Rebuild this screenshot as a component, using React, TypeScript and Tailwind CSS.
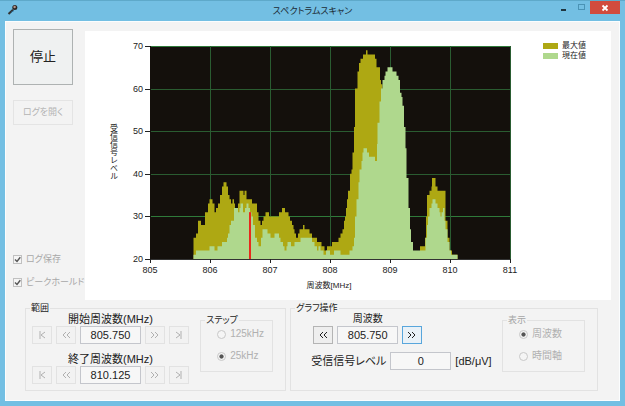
import type { ReactNode } from "react";

// [x offset inside the plot, level in dB], each level holds until the next entry
type Step = [number, number];

const PEAK: Step[] = [
  [43.5, 25], [46, 26], [48, 29], [51, 28], [55, 31], [58, 33], [59.5, 34], [62.5, 33], [64.5, 31], [66, 32],
  [68, 33], [70, 35], [72, 37], [73.5, 38], [76.5, 37], [78, 35], [79.5, 34], [81, 33], [82.5, 34], [84, 33],
  [85, 32], [88, 33], [89.5, 36], [93.5, 35], [94.5, 36], [96.5, 34], [102, 33], [107, 31], [108.5, 29],
  [110.5, 28], [112, 29], [113.5, 30], [115.5, 31], [119, 30], [129, 31], [132, 32], [135, 31], [138.5, 30],
  [140, 29], [142, 28], [143.5, 27], [144.5, 26], [146, 25], [148, 26], [149.5, 27], [153, 28], [154.5, 27],
  [159.5, 26], [162, 25], [167, 24], [171.5, 23], [174.5, 22], [177, 23], [182, 24], [188.5, 25], [190.5, 26],
  [192.5, 27], [194, 29], [195, 30], [196, 32], [197, 34], [198, 36], [200, 40], [201.5, 41], [202.5, 45],
  [204, 51], [205, 60], [207.5, 64], [209, 66], [210.5, 67], [213, 68], [216, 69], [217.5, 68], [225, 67],
  [226.5, 65], [230, 62], [231, 61], [232.5, 20], [270, 23], [275, 25], [276, 30], [277, 35], [279.5, 36],
  [281.5, 37], [282, 39], [285.5, 37], [287.5, 36], [295.5, 29], [297.5, 25], [299.5, 22], [302, 21], [307.5, 20],
];

const CURRENT: Step[] = [
  [43.5, 21], [46, 22], [59.5, 23], [64.5, 22], [67.5, 23], [72, 24], [77, 25], [78, 26], [79.5, 28], [81, 29],
  [84, 32], [88, 31], [89.5, 32], [90.5, 33], [93, 31], [95, 32], [96.5, 33], [98.5, 32], [100, 31], [101.5, 30],
  [103, 28], [105, 25], [107, 24], [108.5, 23], [111, 25], [112.5, 27], [117.5, 26], [120.5, 25], [124.5, 26],
  [129, 25], [130.5, 24], [133, 23], [134.5, 22], [136.5, 23], [137.5, 24], [141, 23], [144.5, 24], [150.5, 25],
  [162, 24], [164.5, 23], [167, 22], [168.5, 23], [170.5, 22], [173.5, 21], [176, 22], [180, 21], [184, 22],
  [190.5, 21], [199.5, 22], [202.5, 23], [204, 25], [205, 30], [206.5, 34], [208.5, 38], [209.5, 41], [211.5, 43],
  [212.5, 45], [213.5, 46], [217, 45], [219, 44], [225, 43], [227, 47], [227.5, 52], [229.5, 57], [231, 60],
  [232.5, 62], [234.5, 63], [235.5, 64], [237.5, 65], [242.5, 64], [246.5, 63], [248.5, 62], [250, 59], [251.5, 58],
  [252.5, 56], [254, 51], [255.5, 46], [256.5, 39], [258.5, 32], [260, 27], [261, 24], [263, 22], [275.5, 25],
  [277, 28], [278, 30], [279.5, 32], [281.5, 33], [282.5, 34], [285.5, 33], [287.5, 32], [289.5, 31], [290.5, 30],
  [291.5, 31], [293, 32], [294.5, 29], [295.5, 27], [297.5, 24], [299.5, 22], [301, 21], [307.5, 20],
];

const LEFT = 65;
const TOP = 15;
const WIDTH = 360;
const HEIGHT = 213;

const levelY = (db: number) => TOP + HEIGHT - ((db - 20) * HEIGHT) / 50;

const toPath = (steps: Step[]) => {
  const body = steps.map(([x, db]) => `H${LEFT + x}V${levelY(db)}`).join("");
  return `M${LEFT + steps[0][0]} ${levelY(20)}${body}Z`;
};

function SpectrumChart() {
  const levels = [70, 60, 50, 40, 30, 20];
  const freqs = [805, 806, 807, 808, 809, 810, 811];

  return (
    <svg viewBox="0 0 430 269" className="block min-w-0 flex-1 overflow-visible text-[9px]" role="img" aria-label="受信信号レベル">
      <rect x={LEFT} y={TOP} width={WIDTH} height={HEIGHT} fill="#14100c" />
      {levels.map(db => (
        <g key={db}>
          <path
            d={`M${LEFT} ${Math.round(levelY(db)) + 0.5}h${WIDTH}`}
            stroke={db === 20 ? "#333333" : db === 70 || db === 30 ? "#2f7a3a" : "#2a5c31"}
          />
          <path d={`M${LEFT - 5} ${Math.round(levelY(db)) + 0.5}h5`} stroke="#222222" />
          <text x={LEFT - 7} y={Math.round(levelY(db)) + 3} textAnchor="end" fill="#222222">{db}</text>
        </g>
      ))}
      {freqs.map((freq, i) => (
        <g key={freq}>
          <path d={`M${LEFT + i * 60 + 0.5} ${TOP}v${HEIGHT}`} stroke={i === 0 ? "#14100c" : "#2a5c31"} />
          <path d={`M${LEFT + i * 60 + 0.5} ${TOP + HEIGHT}v4`} stroke="#222222" />
          <text x={LEFT + i * 60} y={242} textAnchor="middle" fill="#222222">{freq}</text>
        </g>
      ))}
      <path d={toPath(PEAK)} fill="#aea813" />
      <path d={toPath(CURRENT)} fill="#afd88d" />
      <rect x={LEFT + 99} y={levelY(31)} width={2} height={TOP + HEIGHT - levelY(31)} fill="#e8291c" />
      <text x={244} y={257} textAnchor="middle" fill="#222222" className="text-[8px]">周波数[MHz]</text>
      <text x={28} y={121} textAnchor="middle" fill="#222222" className="text-[8px] [font-feature-settings:normal] [writing-mode:vertical-rl]">
        受信信号レベル
      </text>
    </svg>
  );
}

function Group({ title, muted, className = "", children }: {
  title: string;
  muted?: boolean;
  className?: string;
  children: ReactNode;
}) {
  return (
    <fieldset className={`min-w-0 border border-[#e2e2e2] ${className}`}>
      <legend className={`ml-1 px-px text-[9px] leading-2 ${muted ? "text-[#a5a5a5]" : "text-[#222222]"}`}>{title}</legend>
      {children}
    </fieldset>
  );
}

const ARROWS = {
  first: "M5 3V11M10 4L6 7L10 10",
  prev: "M7 4L4 7L7 10M11 4L8 7L11 10",
  next: "M3 4L6 7L3 10M7 4L10 7L7 10",
  last: "M4 4L8 7L4 10M9 3V11",
};

function StepButton({ icon, label, variant = "disabled" }: {
  icon: keyof typeof ARROWS;
  label: string;
  variant?: "disabled" | "normal" | "focused";
}) {
  const look = {
    disabled: "border-[#e2e2e2] bg-[#f2f2f2] text-[#b0b0b0]",
    normal: "border-[#b4b4b4] bg-[#eeeeee] text-[#222222]",
    focused: "border-[#58a6dc] bg-[#e9f1f7] text-[#222222]",
  }[variant];
  return (
    <button
      type="button"
      aria-label={label}
      disabled={variant === "disabled"}
      className={`flex h-[18px] w-5 shrink-0 items-center justify-center border ${look}`}
    >
      <svg viewBox="0 0 14 14" className="size-3.5 shrink-0" fill="none" stroke="currentColor">
        <path d={ARROWS[icon]} />
      </svg>
    </button>
  );
}

function ValueBox({ id, value }: { id: string; value: string }) {
  return (
    <input
      id={id}
      readOnly
      defaultValue={value}
      className="h-[18px] w-[61px] border border-[#c4c6cc] bg-[#f7f7f7] text-center text-[11px] text-[#222222] outline-none"
    />
  );
}

function RangeField({ id, label, value }: { id: string; label: string; value: string }) {
  return (
    <div className="flex flex-col items-center">
      <label htmlFor={id} className="text-[11px] leading-[14px]">{label}</label>
      <div className="flex items-center gap-1">
        <StepButton icon="first" label="最小" />
        <StepButton icon="prev" label="前へ" />
        <ValueBox id={id} value={value} />
        <StepButton icon="next" label="次へ" />
        <StepButton icon="last" label="最大" />
      </div>
    </div>
  );
}

function Radio({ name, label, checked }: { name: string; label: string; checked?: boolean }) {
  return (
    <label className="flex items-center gap-1 text-[10px] leading-4 text-[#b0b0b0]">
      <input
        type="radio"
        name={name}
        defaultChecked={checked}
        disabled
        className="size-[9px] appearance-none rounded-full border border-[#c8c8c8] bg-[#f5f5f5] checked:bg-[radial-gradient(#555555_35%,#f5f5f5_50%)]"
      />
      {label}
    </label>
  );
}

function Check({ label }: { label: string }) {
  return (
    <label className="flex items-center gap-1 text-[9px] leading-4 whitespace-nowrap text-[#a8a8a8]">
      <span className="relative flex size-[9px]">
        <input type="checkbox" defaultChecked disabled className="size-[9px] appearance-none border border-[#c0c0c0] bg-[#f5f5f5]" />
        <svg viewBox="0 0 9 9" className="pointer-events-none absolute inset-0 size-[9px]" fill="none" stroke="#555555" strokeWidth="1.4">
          <path d="M2 4.5L4 6.5L7.3 2.2" />
        </svg>
      </span>
      {label}
    </label>
  );
}

function TitleBar() {
  return (
    <header className="flex h-5 items-start">
      <div className="flex flex-1">
        <svg viewBox="0 0 12 12" className="mt-[3px] ml-0.5 size-3">
          <path d="M1.5 10L6 5.8" stroke="#333333" strokeWidth="2" />
          <path d="M4 8.5L7 6.5" stroke="#2f6d94" strokeWidth="1" />
          <circle cx="7.8" cy="3.6" r="2.5" fill="#2b2625" />
          <circle cx="7.6" cy="3" r="1.2" fill="#b5968c" />
        </svg>
      </div>
      <h1 className="pt-0.5 text-[9px] leading-4 text-[#1c2c36]">スペクトラムスキャン</h1>
      <div className="flex flex-1 justify-end">
        <button type="button" aria-label="最小化" className="flex h-3 w-[18px] items-end justify-center pb-0.5">
          <span className="h-0.5 w-[5px] bg-[#1f3540]" />
        </button>
        <button type="button" aria-label="最大化" className="flex h-3 w-[18px] items-center justify-center">
          <span className="h-[6px] w-[7px] border border-[#4a93b5]" />
        </button>
        <button type="button" aria-label="閉じる" className="flex h-[13px] w-[30px] items-center justify-center bg-[#d14b3d] text-white">
          <svg viewBox="0 0 8 8" className="size-2" stroke="currentColor" strokeWidth="1.8">
            <path d="M1.5 1.5L6.5 6.5M6.5 1.5L1.5 6.5" />
          </svg>
        </button>
      </div>
    </header>
  );
}

export default function App() {
  return (
    <div className="flex min-h-screen flex-col border-t border-[#5ea9ca] bg-[#73bfe3] px-[5px] pb-[5px] font-['Liberation_Sans','Noto_Sans_CJK_JP',sans-serif] text-[#222222] [font-feature-settings:'palt']">
      <TitleBar />
      <main className="flex-1 border border-[#fbfdfe] bg-[#f3f3f3] pt-[7px] pb-2">
        <div className="flex pr-2">
          <aside className="flex w-[79px] flex-col items-start pl-[7px]">
            <button type="button" className="h-14 w-[60px] border border-[#aeb2b2] bg-[#eff1f1] text-[13px]">停止</button>
            <button type="button" disabled className="mt-[15px] h-[25px] w-[60px] border border-[#e4e4e4] text-[9px] text-[#b4b4b4]">
              ログを開く
            </button>
            <div className="mt-auto mb-2.5 flex flex-col gap-[7px]">
              <Check label="ログ保存" />
              <Check label="ピークホールド" />
            </div>
          </aside>
          <section className="mt-0.5 flex min-w-0 flex-1 bg-white">
            <SpectrumChart />
            <ul className="w-24 shrink-0 pt-[10px] pl-7 text-[8px] leading-[10px]">
              <li className="flex items-center gap-1">
                <span className="h-1.5 w-[15px] bg-[#aea813]" />
                最大値
              </li>
              <li className="flex items-center gap-1">
                <span className="h-1.5 w-[15px] bg-[#afd88d]" />
                現在値
              </li>
            </ul>
          </section>
        </div>

        <div className="mt-1 flex items-stretch gap-1 pr-[21px] pl-[19px]">
          <Group title="範囲" className="flex-[261] pb-1.5">
            <div className="flex items-start justify-between pr-3 pl-1.5">
              <div className="flex flex-col gap-2">
                <RangeField id="start-freq" label="開始周波数(MHz)" value="805.750" />
                <RangeField id="end-freq" label="終了周波数(MHz)" value="810.125" />
              </div>
              <Group title="ステップ" className="mt-1 h-14 w-[73px]">
                <div className="flex flex-col gap-1.5 pt-0.5 pl-4">
                  <Radio name="step" label="125kHz" />
                  <Radio name="step" label="25kHz" checked />
                </div>
              </Group>
            </div>
          </Group>

          <Group title="グラフ操作" className="flex-[308]">
            <div className="flex items-start justify-between pr-3 pl-5">
              <div className="flex flex-col gap-2">
                <div className="flex items-end gap-1 pl-0.5">
                  <StepButton icon="prev" label="前へ" variant="normal" />
                  <div className="flex flex-col items-center">
                    <label htmlFor="cursor-freq" className="text-[10px] leading-[14px]">周波数</label>
                    <ValueBox id="cursor-freq" value="805.750" />
                  </div>
                  <StepButton icon="next" label="次へ" variant="focused" />
                </div>
                <div className="flex items-center gap-1 text-[11px] leading-4 whitespace-nowrap">
                  <label htmlFor="level">受信信号レベル</label>
                  <ValueBox id="level" value="0" />
                  <span>[dB/μV]</span>
                </div>
              </div>
              <Group title="表示" muted className="mt-1 h-14 w-[83px]">
                <div className="flex flex-col gap-1.5 pt-0.5 pl-4">
                  <Radio name="view" label="周波数" checked />
                  <Radio name="view" label="時間軸" />
                </div>
              </Group>
            </div>
          </Group>
        </div>
      </main>
    </div>
  );
}
